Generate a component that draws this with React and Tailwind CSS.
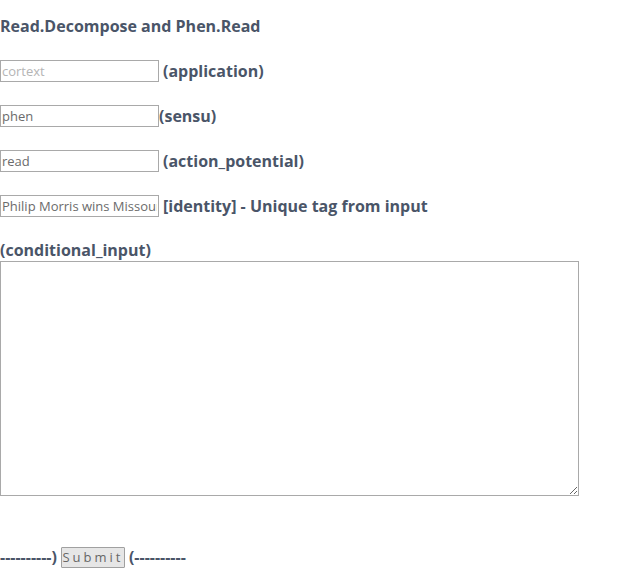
import React from 'react';

const font = { fontFamily: '"Open Sans", "Liberation Sans", sans-serif' };

function Row({ value, placeholder, label, gap = true }) {
  return (
    <div className="flex items-center h-[22px]">
      <input
        type="text"
        defaultValue={value}
        placeholder={placeholder}
        className="w-[159px] h-[22px] border border-[#a9a9a9] px-px text-[13px] text-[#6b6b6b] placeholder:text-[#b5b5b5] outline-none bg-white"
        style={font}
      />
      <span className={`text-[16px] font-bold text-[#4a5568] ${gap ? 'ml-[4px]' : 'ml-0'}`}>{label}</span>
    </div>
  );
}

export default function App() {
  return (
    <div className="w-[643px] h-[584px] bg-white text-[#4a5568]" style={font}>
      <div className="pt-[15px] text-[16px] font-bold leading-[22px]">Read.Decompose and Phen.Read</div>
      <div className="mt-[23px] flex flex-col gap-[23px]">
        <Row placeholder="cortext" label="(application)" />
        <Row value="phen" label="(sensu)" gap={false} />
        <Row value="read" label="(action_potential)" />
        <Row value="Philip Morris wins Missouri" label="[identity] - Unique tag from input" />
      </div>
      <div className="mt-[22px] text-[16px] font-bold leading-[22px]">(conditional_input)</div>
      <textarea className="block w-[579px] h-[235px] border border-[#a9a9a9] bg-white outline-none" />
      <div className="mt-[50px] flex items-center h-[22px] text-[16px] font-bold">
        <span>----------)</span>
        <button className="ml-[4px] mr-[4px] h-[21px] w-[64px] border border-[#a0a0a0] bg-[#e6e6e6] text-[13px] font-normal text-[#666] tracking-[3px] rounded-[1px]" style={font}>
          Submit
        </button>
        <span>(----------</span>
      </div>
    </div>
  );
}
